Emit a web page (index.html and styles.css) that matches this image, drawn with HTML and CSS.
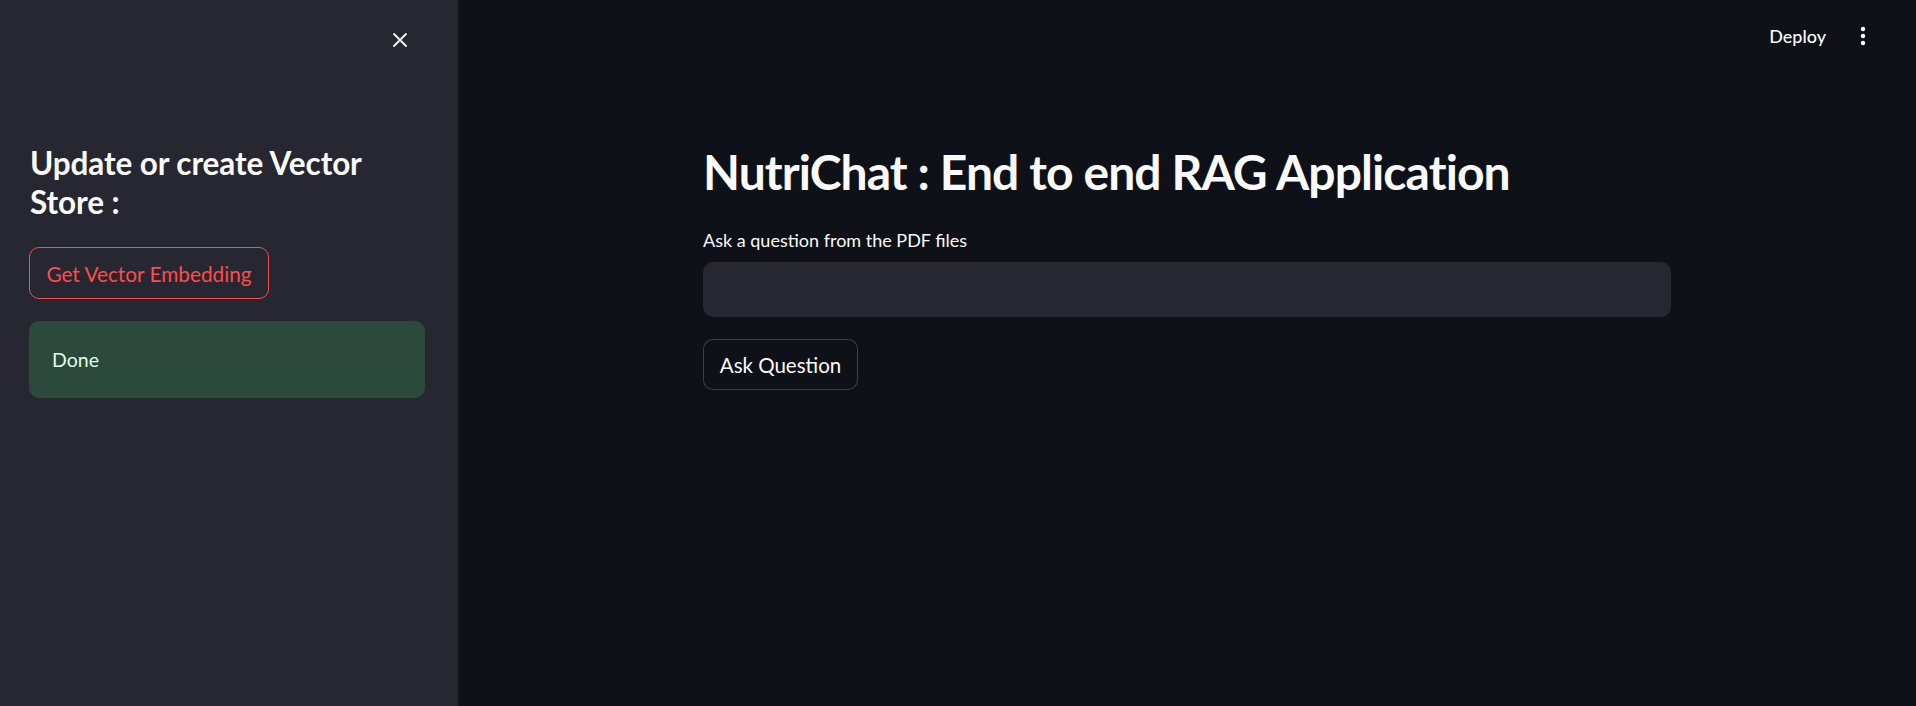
FILE: index.html
```html
<!DOCTYPE html>
<html lang="en">
<head>
<meta charset="utf-8">
<title>NutriChat</title>
<link rel="stylesheet" href="styles.css">
</head>
<body>
<div class="app">
  <aside class="sidebar">
    <div class="sb-top">
      <button class="close-btn" aria-label="Close sidebar">
        <svg width="16" height="16" viewBox="0 0 16 16"><path d="M2 2 L14 14 M14 2 L2 14" stroke="#fafafa" stroke-width="1.8" stroke-linecap="round"/></svg>
      </button>
    </div>
    <h2 class="sb-title">Update or create Vector Store :</h2>
    <button class="btn-outline-red">Get Vector Embedding</button>
    <div class="alert-success">Done</div>
  </aside>
  <main class="main">
    <header class="topbar">
      <span class="deploy">Deploy</span>
      <span class="kebab" aria-label="Main menu">
        <svg width="6" height="20" viewBox="0 0 6 20"><circle cx="3" cy="3" r="2.2" fill="#fafafa"/><circle cx="3" cy="10" r="2.2" fill="#fafafa"/><circle cx="3" cy="17" r="2.2" fill="#fafafa"/></svg>
      </span>
    </header>
    <section class="content">
      <h1 class="title">NutriChat : End to end RAG Application</h1>
      <label class="field-label" for="q">Ask a question from the PDF files</label>
      <input class="text-input" id="q" type="text">
      <button class="btn-secondary">Ask Question</button>
    </section>
  </main>
</div>
</body>
</html>
```

FILE: styles.css
```css
* { box-sizing: border-box; }
html, body { margin: 0; padding: 0; height: 100%; }
body {
  background: #0e1117;
  color: #fafafa;
  font-family: Lato, "Open Sans", sans-serif;
  overflow: hidden;
}
.app {
  display: flex;
  height: 706px;
}
.sidebar {
  width: 458px;
  flex: none;
  background: #262730;
  padding: 0 33px 0 29px;
  display: flex;
  flex-direction: column;
  align-items: flex-start;
}
.sb-top {
  height: 80px;
  width: 100%;
  display: flex;
  justify-content: flex-end;
  align-items: flex-start;
  padding-top: 32px;
  padding-right: 17px;
}
.close-btn {
  background: none;
  border: none;
  padding: 0;
  width: 16px;
  height: 16px;
  display: flex;
  cursor: pointer;
}
.sb-title {
  margin: 64px 0 0 1px;
  font-size: 31.5px;
  line-height: 39px;
  font-weight: 700;
  letter-spacing: -0.1px;
  width: 360px;
}
.btn-outline-red {
  margin-top: 25px;
  height: 52px;
  width: 240px;
  padding: 0;
  background: transparent;
  border: 1px solid #ff4b4b;
  border-radius: 10px;
  color: #ff4b4b;
  font-family: inherit;
  font-size: 20.8px;
}
.alert-success {
  margin-top: 22px;
  width: 396px;
  height: 77px;
  background: #2b4a3c;
  border-radius: 10px;
  color: #dffde9;
  font-size: 19.5px;
  padding: 0 23px;
  display: flex;
  align-items: center;
}
.main {
  flex: 1;
  display: flex;
  flex-direction: column;
}
.topbar {
  height: 76px;
  display: flex;
  justify-content: flex-end;
  align-items: center;
  gap: 34px;
  padding-right: 50px;
  padding-bottom: 4px;
}
.deploy {
  font-size: 18px;
  font-weight: 500;
}
.kebab { display: flex; }
.content {
  padding: 0 245px;
  display: flex;
  flex-direction: column;
  align-items: flex-start;
}
.title {
  margin: 64px 0 0 0;
  font-size: 48px;
  line-height: 64px;
  font-weight: 700;
  letter-spacing: -0.9px;
  white-space: nowrap;
}
.field-label {
  margin-top: 26px;
  font-size: 18px;
  line-height: 20px;
}
.text-input {
  margin-top: 12px;
  width: 100%;
  height: 55px;
  background: #262730;
  border: none;
  border-radius: 10px;
  color: #fafafa;
  font-size: 19px;
  padding: 0 16px;
  outline: none;
}
.btn-secondary {
  margin-top: 22px;
  height: 51px;
  width: 155px;
  padding: 0;
  background: #0e1117;
  border: 1px solid rgba(250, 250, 250, 0.2);
  border-radius: 10px;
  color: #fafafa;
  font-family: inherit;
  font-size: 20.5px;
}
```
